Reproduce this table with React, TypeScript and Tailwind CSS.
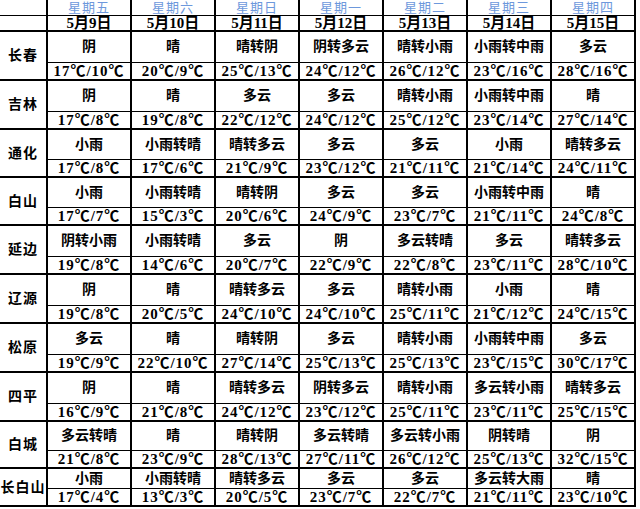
const days = [
  { week: "星期五", date: "5月9日" },
  { week: "星期六", date: "5月10日" },
  { week: "星期日", date: "5月11日" },
  { week: "星期一", date: "5月12日" },
  { week: "星期二", date: "5月13日" },
  { week: "星期三", date: "5月14日" },
  { week: "星期四", date: "5月15日" },
];

// [天气, 最高, 最低]
const rows: { city: string; h: number; cells: [string, number, number][] }[] = [
  { city: "长春", h: 49, cells: [["阴", 17, 10], ["晴", 20, 9], ["晴转阴", 25, 13], ["阴转多云", 24, 12], ["晴转小雨", 26, 12], ["小雨转中雨", 23, 16], ["多云", 28, 16]] },
  { city: "吉林", h: 49, cells: [["阴", 17, 8], ["晴", 19, 8], ["多云", 22, 12], ["多云", 24, 12], ["晴转小雨", 25, 12], ["小雨转中雨", 23, 14], ["晴", 27, 14]] },
  { city: "通化", h: 48, cells: [["小雨", 17, 8], ["小雨转晴", 17, 6], ["晴转多云", 21, 9], ["多云", 23, 12], ["多云", 21, 11], ["小雨", 21, 14], ["晴转多云", 24, 11]] },
  { city: "白山", h: 48, cells: [["小雨", 17, 7], ["小雨转晴", 15, 3], ["晴转阴", 20, 6], ["多云", 24, 9], ["多云", 23, 7], ["小雨转中雨", 21, 11], ["晴", 24, 8]] },
  { city: "延边", h: 49, cells: [["阴转小雨", 19, 8], ["小雨转晴", 14, 6], ["多云", 20, 7], ["阴", 22, 9], ["多云转晴", 22, 8], ["多云", 23, 11], ["晴转多云", 28, 10]] },
  { city: "辽源", h: 49, cells: [["阴", 19, 8], ["晴", 20, 5], ["晴转多云", 24, 10], ["多云", 24, 10], ["晴转小雨", 25, 11], ["小雨", 21, 12], ["晴", 24, 15]] },
  { city: "松原", h: 49, cells: [["多云", 19, 9], ["晴", 22, 10], ["晴转阴", 27, 14], ["多云", 25, 13], ["晴转小雨", 25, 13], ["小雨转中雨", 23, 15], ["多云", 30, 17]] },
  { city: "四平", h: 49, cells: [["阴", 16, 9], ["晴", 21, 8], ["晴转多云", 24, 12], ["阴转多云", 23, 12], ["晴转小雨", 25, 11], ["多云转小雨", 23, 11], ["晴转多云", 25, 15]] },
  { city: "白城", h: 47, cells: [["多云转晴", 21, 8], ["晴", 23, 9], ["晴转阴", 28, 13], ["多云转晴", 27, 11], ["多云转小雨", 26, 12], ["阴转晴", 25, 13], ["阴", 32, 15]] },
  { city: "长白山", h: 38, cells: [["小雨", 17, 4], ["小雨转晴", 13, 3], ["晴转多云", 20, 5], ["多云", 23, 7], ["多云", 22, 7], ["多云转大雨", 21, 11], ["晴", 23, 10]] },
];

const font = { fontFamily: '"Liberation Serif", "Noto Sans CJK SC", serif' };

export default function App() {
  return (
    <div className="w-[640px] h-[509px] bg-white overflow-hidden text-black" style={font}>
      {/* 表头 */}
      <div className="flex h-[16px]">
        <div className="w-[48px] shrink-0 border-r-2 border-b border-black" />
        {days.map((d) => (
          <div key={d.week} className="w-[84px] shrink-0 border-r-2 border-b border-black flex items-center justify-center">
            <span className="text-[13px] leading-[15px] text-[#6d98dc] tracking-[1px]">{d.week}</span>
          </div>
        ))}
      </div>
      <div className="flex h-[16px]">
        <div className="w-[48px] shrink-0 border-r-2 border-b-2 border-black" />
        {days.map((d) => (
          <div key={d.date} className="w-[84px] shrink-0 border-r-2 border-b-2 border-black flex items-center justify-center overflow-hidden">
            <span className="text-[15px] leading-[14px] font-semibold">{d.date}</span>
          </div>
        ))}
      </div>

      {rows.map((r) => (
        <div key={r.city} className="flex" style={{ height: r.h }}>
          <div className="w-[48px] shrink-0 border-r-2 border-b-2 border-black flex items-center justify-center">
            <span className="text-[14px] font-semibold tracking-[1px] whitespace-nowrap">{r.city}</span>
          </div>
          {r.cells.map(([w, hi, lo], i) => (
            <div key={i} className="w-[84px] shrink-0 flex flex-col border-r-2 border-b-2 border-black">
              <div className="flex-1 border-b border-black flex items-center justify-center overflow-hidden">
                <span className="text-[14px] leading-[16px] font-semibold whitespace-nowrap">{w}</span>
              </div>
              <div className="h-[16px] flex items-center justify-center overflow-hidden">
                <span className="text-[15px] leading-[15px] font-semibold tracking-[1px] whitespace-nowrap">
                  {hi}℃/{lo}℃
                </span>
              </div>
            </div>
          ))}
        </div>
      ))}
    </div>
  );
}
